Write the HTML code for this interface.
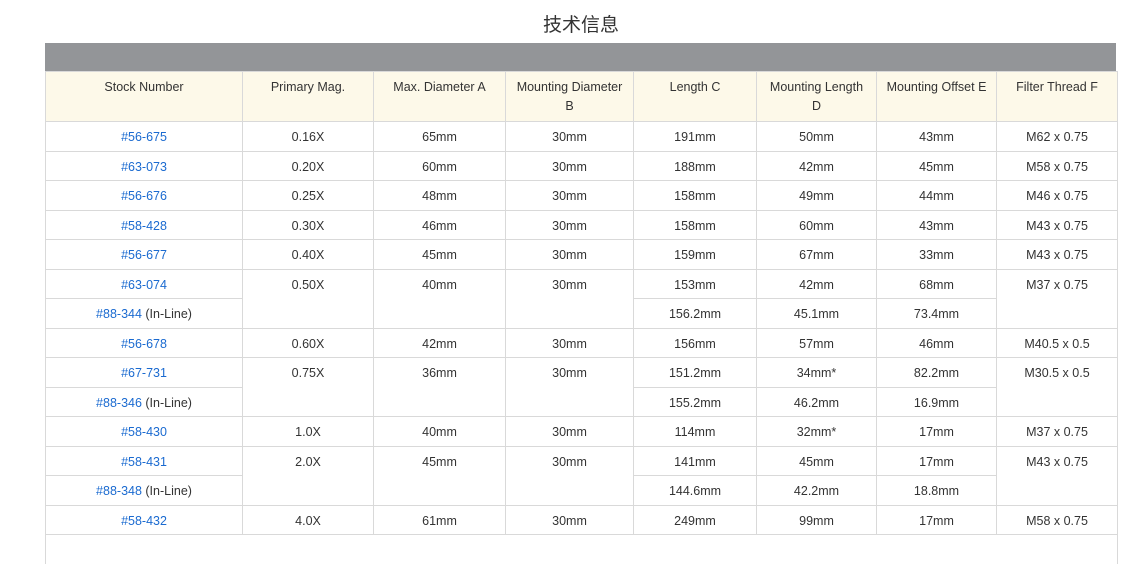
<!DOCTYPE html>
<html><head><meta charset="utf-8"><style>
body{margin:0;background:#fff;font-family:"Liberation Sans","Noto Sans CJK SC",sans-serif;color:#333;width:1132px;height:543px;overflow:hidden;position:relative}
h1{position:absolute;top:10px;left:0;width:1162px;text-align:center;margin:0;font-size:19px;font-weight:normal;color:#333;font-family:"Liberation Sans","Noto Sans CJK SC",sans-serif}
.bar{position:absolute;left:45px;top:43px;width:1071px;height:28px;background:#939598}
table{position:absolute;left:45px;top:71px;border-collapse:collapse;table-layout:fixed;width:1072px;font-size:12.5px}
tr{height:29.5px}
td,th{border:1px solid #d9d9d9;text-align:center;vertical-align:top;padding:8px 0 0;line-height:14px;box-sizing:border-box;height:29.5px}
th{background:#fdf9e9;font-weight:normal;height:50px;line-height:19px;padding-top:6px}
tr.h{height:50px}
a{color:#1a6ad0;text-decoration:none}
</style></head><body>
<h1>技术信息</h1>
<div class="bar"></div>
<table>
<colgroup><col style="width:197px"><col style="width:131px"><col style="width:132px"><col style="width:128px"><col style="width:123px"><col style="width:120px"><col style="width:120px"><col style="width:121px"></colgroup>
<tr class="h"><th>Stock Number</th><th>Primary Mag.</th><th>Max. Diameter A</th><th>Mounting Diameter<br>B</th><th>Length C</th><th>Mounting Length<br>D</th><th>Mounting Offset E</th><th>Filter Thread F</th></tr>
<tr><td><a>#56-675</a></td><td>0.16X</td><td>65mm</td><td>30mm</td><td>191mm</td><td>50mm</td><td>43mm</td><td>M62 x 0.75</td></tr>
<tr><td><a>#63-073</a></td><td>0.20X</td><td>60mm</td><td>30mm</td><td>188mm</td><td>42mm</td><td>45mm</td><td>M58 x 0.75</td></tr>
<tr><td><a>#56-676</a></td><td>0.25X</td><td>48mm</td><td>30mm</td><td>158mm</td><td>49mm</td><td>44mm</td><td>M46 x 0.75</td></tr>
<tr><td><a>#58-428</a></td><td>0.30X</td><td>46mm</td><td>30mm</td><td>158mm</td><td>60mm</td><td>43mm</td><td>M43 x 0.75</td></tr>
<tr><td><a>#56-677</a></td><td>0.40X</td><td>45mm</td><td>30mm</td><td>159mm</td><td>67mm</td><td>33mm</td><td>M43 x 0.75</td></tr>
<tr><td><a>#63-074</a></td><td rowspan="2">0.50X</td><td rowspan="2">40mm</td><td rowspan="2">30mm</td><td>153mm</td><td>42mm</td><td>68mm</td><td rowspan="2">M37 x 0.75</td></tr>
<tr><td><a>#88-344</a> (In-Line)</td><td>156.2mm</td><td>45.1mm</td><td>73.4mm</td></tr>
<tr><td><a>#56-678</a></td><td>0.60X</td><td>42mm</td><td>30mm</td><td>156mm</td><td>57mm</td><td>46mm</td><td>M40.5 x 0.5</td></tr>
<tr><td><a>#67-731</a></td><td rowspan="2">0.75X</td><td rowspan="2">36mm</td><td rowspan="2">30mm</td><td>151.2mm</td><td>34mm*</td><td>82.2mm</td><td rowspan="2">M30.5 x 0.5</td></tr>
<tr><td><a>#88-346</a> (In-Line)</td><td>155.2mm</td><td>46.2mm</td><td>16.9mm</td></tr>
<tr><td><a>#58-430</a></td><td>1.0X</td><td>40mm</td><td>30mm</td><td>114mm</td><td>32mm*</td><td>17mm</td><td>M37 x 0.75</td></tr>
<tr><td><a>#58-431</a></td><td rowspan="2">2.0X</td><td rowspan="2">45mm</td><td rowspan="2">30mm</td><td>141mm</td><td>45mm</td><td>17mm</td><td rowspan="2">M43 x 0.75</td></tr>
<tr><td><a>#88-348</a> (In-Line)</td><td>144.6mm</td><td>42.2mm</td><td>18.8mm</td></tr>
<tr><td><a>#58-432</a></td><td>4.0X</td><td>61mm</td><td>30mm</td><td>249mm</td><td>99mm</td><td>17mm</td><td>M58 x 0.75</td></tr>
<tr><td colspan="8" style="border-bottom:none"></td></tr>
</table>
</body></html>
